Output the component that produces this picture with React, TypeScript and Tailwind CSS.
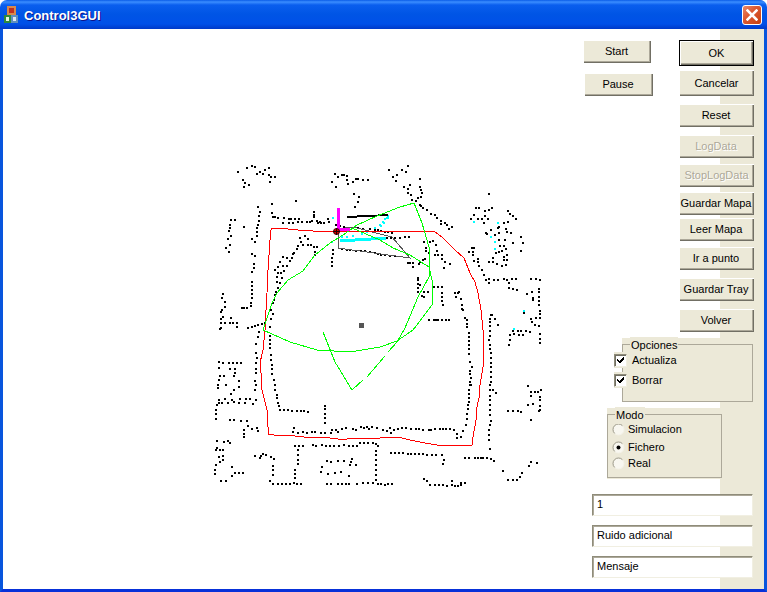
import type { ReactNode } from 'react';

type Pt = [number, number];

// scan dots, written as crop coordinates (3x zoom) relative to an origin
const dotGroups: { ox: number; oy: number; pts: number[] }[] = [
  {
    ox: 210,
    oy: 160,
    pts: [
      83,36, 110,24, 125,17, 135,22, 177,24, 165,30, 150,36, 140,42, 160,42, 177,44, 195,50, 183,52, 180,65, 98,60, 105,70, 116,75, 102,81,
      375,42, 383,50, 397,45, 403,45, 410,48, 410,60, 437,57, 445,57, 460,60, 473,60, 428,66, 415,72, 366,66, 378,80, 432,101, 446,111, 444,127, 436,140,
      258,123, 186,132, 144,141, 150,156, 186,159, 147,168, 147,183, 143,195, 142,204, 141,216, 141,228, 135,246, 126,238,
      75,180, 62,181, 60,195, 59,204, 57,214, 63,228, 54,238, 59,254, 48,264, 56,276, 102,201,
      188,171, 195,172, 205,174, 222,174, 236,177, 243,177, 255,177, 267,177, 219,188, 237,188, 248,188, 264,186, 275,186, 290,185, 300,185, 305,184, 322,183, 330,186, 342,188, 355,178, 358,187, 311,157, 311,166, 311,171, 323,190, 334,190, 378,195,
      270,234, 284,228, 294,237, 273,245, 263,258, 278,256, 293,254, 303,256, 262,266, 253,280, 249,282, 245,295, 232,295, 220,292, 210,306, 218,318, 230,318, 240,303, 203,322, 195,330, 222,333, 213,340, 203,340, 201,352, 215,355, 200,366, 211,369, 205,383, 199,396, 195,406, 192,419, 188,430, 184,450, 188,463, 184,477, 181,501,
      313,262, 322,262, 314,276, 315,286,
      126,282, 135,288, 132,313, 132,323, 127,336, 126,366, 126,378, 126,390, 126,402, 126,414, 123,429, 123,438, 112,445, 102,443, 96,444,
      39,402, 37,413, 45,427, 45,440, 35,450, 32,455, 38,471, 63,474, 32,478, 32,490, 44,489, 60,489, 69,489, 80,489, 81,501, 33,505, 30,507, 114,505, 126,501, 135,498, 144,495, 156,492, 165,488,
      368,270, 370,282, 367,295, 366,306, 366,317,
      395,268, 410,270, 420,270, 438,272, 452,273, 465,273, 480,277, 495,279, 505,281,
      390,198, 402,200, 415,203, 430,205, 445,205, 460,206, 480,207, 495,210, 505,210,
    ],
  },
  {
    ox: 380,
    oy: 160,
    pts: [
      27,30, 83,17, 65,30, 78,36, 52,45, 40,51, 47,63, 120,57, 73,81, 90,75, 120,80, 123,90, 83,87, 83,100, 126,99, 93,105, 123,110, 114,113, 96,120, 107,123, 120,135, 123,138, 130,144, 140,150, 153,162, 165,165, 172,174, 183,183, 183,192, 195,189, 200,195, 216,201, 207,207,
      327,102, 288,144, 297,144, 336,144, 327,150, 315,153, 282,165, 315,168, 273,177, 294,177, 306,177, 324,177, 312,189, 372,188, 384,186, 383,153, 390,162, 399,168, 408,177, 358,201, 354,204, 378,207, 333,210, 318,218, 321,222, 357,219, 345,225, 381,215, 392,219, 375,240, 423,231, 429,249, 399,249, 357,240, 360,258, 372,258, 348,279, 357,276, 366,273, 378,267, 423,273, 381,285, 372,291, 381,300, 372,300, 339,294, 327,306, 339,306, 351,312, 366,318, 378,315,
      281,264, 276,264, 267,276, 278,276, 279,285, 294,297, 282,303, 294,306, 297,318, 306,330, 312,345, 318,360, 327,357, 327,369, 342,360, 354,360, 372,357, 381,360, 387,369, 396,357, 408,357, 387,384, 399,387, 411,390, 453,357, 468,357, 480,360, 477,387, 477,396, 456,396, 441,402, 458,413, 460,420, 477,411, 477,423, 477,435, 431,459, 480,453, 480,462, 480,474, 468,474, 453,477, 456,486, 465,495, 477,498, 333,465, 337,465, 330,477, 345,477, 330,486, 330,498, 354,495,
      9,165, 2,213, 15,216, 24,216, 36,218, 21,234, 33,234, 45,234, 60,234, 75,231, 87,231, 132,246, 150,246, 159,243, 168,255, 138,264, 138,273, 147,279, 171,273, 165,285, 174,285, 186,285, 186,297, 195,306, 210,312, 192,324, 135,297, 129,300, 120,306, 84,309, 90,309, 99,309, 117,312, 99,321, 114,354, 114,360, 114,372, 120,375, 114,385, 114,396, 132,396, 126,408, 132,411, 144,396, 162,381, 174,381, 186,381, 186,399, 186,411, 186,423, 189,435, 225,399, 237,396, 234,399, 228,411, 243,417, 246,435, 246,447, 249,450, 255,474, 261,480, 261,492, 261,501, 147,480, 162,480, 168,480, 174,480, 186,480, 198,480, 207,480, 15,285, 30,288, 45,288, 3,285,
    ],
  },
  {
    ox: 210,
    oy: 330,
    pts: [
      147,6, 145,21, 137,42, 137,69, 141,84, 138,100, 137,117, 137,130, 135,153, 138,165, 135,180, 180,18, 180,30, 180,42, 180,54, 183,75, 183,90, 186,105, 186,117, 186,132, 192,150, 195,165, 195,180, 201,195, 201,204, 204,218, 207,228, 210,240, 222,240, 234,240, 246,243, 261,243, 273,243, 282,243, 294,246,
      27,96, 39,99, 57,99, 69,99, 81,99, 93,99, 27,114, 60,117, 75,117, 75,129, 30,138, 42,138, 72,138, 27,150, 48,165, 87,153, 87,171, 24,165, 24,175, 72,180, 63,192, 45,207, 27,210, 27,219, 36,219, 54,219, 66,210, 72,216, 90,207, 108,207, 120,207, 138,210, 87,219, 105,219, 129,222, 21,225, 18,240, 18,252, 18,267, 60,270, 72,270, 93,273, 111,273, 114,288, 102,300, 102,312, 102,320, 126,297, 141,294, 144,303,
      345,228, 345,237, 345,252, 345,264, 345,279, 252,294, 249,306, 264,309, 279,306, 291,309, 306,306, 315,306, 333,309, 345,309, 366,300, 363,309, 378,300, 384,306, 396,298, 408,294, 429,297, 438,300, 453,291, 462,294, 471,291, 477,297, 486,291, 501,294,
      21,333, 21,354, 18,360, 42,336, 54,333, 60,339, 30,360, 39,360, 39,378, 27,381, 39,390, 30,396, 18,405, 15,420, 15,432, 66,411, 75,429, 87,429, 99,429, 66,438, 33,453, 48,453,
      135,378, 153,378, 159,372, 150,384, 168,375, 183,381, 192,387, 189,408, 189,420, 189,435, 180,453, 189,462, 204,462, 216,462, 228,462, 240,462, 252,459, 261,462, 273,462,
      255,348, 267,348, 279,348, 309,345, 318,348, 336,345, 348,348, 360,348, 372,348, 387,348, 402,345, 417,348, 429,348, 441,348, 450,339, 462,339, 474,339, 489,339, 498,342, 504,348, 498,363, 498,375, 498,390, 498,405, 498,420, 498,435, 498,450, 504,462, 264,360, 264,375, 264,390, 264,402, 255,420, 255,432, 255,444,
      351,393, 363,396, 384,393, 402,393, 426,387, 423,396, 420,405, 438,405, 336,411, 333,426, 354,432, 375,429, 393,426, 417,438, 351,462, 363,462, 384,462, 396,462, 408,462, 417,462, 441,462, 459,459, 474,459, 489,459,
    ],
  },
  {
    ox: 380,
    oy: 330,
    pts: [
      267,9, 267,21, 267,33, 267,45, 267,57, 267,72, 270,96, 276,111, 270,123, 270,132, 273,144, 270,156, 270,165, 273,165, 267,180, 267,192, 267,204, 267,216, 264,225, 264,237, 261,252, 261,267, 258,285, 249,303, 243,321, 231,312, 231,324,
      330,3, 330,18, 327,30, 330,45, 330,57, 333,69, 333,84, 333,99, 333,111, 333,126, 333,141, 333,156, 330,165, 330,180, 330,198, 330,210, 330,225, 330,240, 330,255, 333,273, 330,285, 327,300, 327,315, 327,330, 330,357, 339,180, 348,189,
      399,3, 390,15, 402,12, 417,15, 429,15, 414,3, 423,3, 438,3, 450,6, 480,12, 480,27, 390,30, 387,45, 480,39,
      444,168, 453,186, 465,186, 474,186, 483,180, 453,198, 480,201, 480,210, 480,228, 444,225, 459,222, 480,240, 477,243, 384,243, 399,243, 414,243, 423,246, 453,270,
      9,300, 21,303, 30,294, 33,309, 42,300, 54,297, 66,294, 78,294, 93,297, 108,297, 117,297, 129,300, 147,300, 153,300, 165,297, 180,297, 189,297, 198,297, 210,297, 222,300,
      33,369, 45,369, 57,369, 69,369, 84,372, 93,372, 105,372, 117,372, 129,372, 141,375, 156,375, 168,375, 186,375, 192,390, 189,402, 255,384, 267,384, 285,384, 294,384, 303,384, 309,384, 321,384, 333,387, 342,393, 369,423, 384,450, 399,450, 411,450, 420,441, 426,429, 447,408, 453,396, 471,399,
      132,447, 141,453, 150,465, 165,465, 177,465, 189,465, 201,468, 216,453, 216,465, 225,468, 234,468, 243,465, 243,459, 255,459, 3,462, 15,465, 24,462, 36,462,
    ],
  },
];

// cyan readings near the robot and at the right side of the map
const cyanDots: Pt[] = [
  [332, 217], [386, 217], [382, 221], [379, 224], [374, 227], [366, 231], [361, 233], [352, 235], [346, 236], [341, 236], [331, 241],
  [387, 215], [384, 218], [387, 217], [383, 222], [380, 225], [382, 238], [473, 221], [497, 222], [490, 236], [494, 241], [494, 248], [523, 310], [513, 328],
];

const dotsPath = dotGroups
  .map((g) => {
    let d = '';
    for (let i = 0; i < g.pts.length; i += 2) {
      const x = Math.round(g.pts[i] / 3 + g.ox - 1);
      const y = Math.round(g.pts[i + 1] / 3 + g.oy - 1);
      d += `M${x} ${y}h2v2h-2z`;
    }
    return d;
  })
  .join('');

const cyanPath = cyanDots.map(([x, y]) => `M${x} ${y}h2v2h-2z`).join('');

const redLine =
  '336,231 327,231 313,231 298,230 288,229 272,228 270,232 270,240 268,270 267,293 266,310 265,330 263,350 260,363 261,373 262,390 265,402 267,410 268,427 268,434 274,435 295,436 304,437 330,438 338,439 347,439 348,438 380,438 391,437 398,437 410,440 425,443 437,445 472,445 473,437 476,420 477,407 479,398 480,385 482,373 483,367 483,330 481,310 478,293 475,282 470,273 464,258 455,250 442,237 434,231 380,231 336,231';
const greenArc =
  '263,330 272,303 277,293 288,280 303,271 315,255 330,243 343,235 357,225 377,216 400,207 414,203 422,223 429,247 429,277 418,297 405,328 397,342 388,352';
const greenArc2 =
  '263,330 290,342 317,350 350,352 380,347 397,341 413,330 432,305 432,280 429,267 410,255 393,248 380,240 352,228';
const greyLine = '338,229 338,248 410,258 392,237 353,227 338,229';

function MapView() {
  return (
    <svg width={580} height={560} viewBox="3 29 580 560" shapeRendering="crispEdges" className="shrink-0">
      <path d={dotsPath} fill="#000" />
      <path d={cyanPath} fill="#00ffff" />
      <polyline points={greyLine} fill="none" stroke="#555" strokeWidth={1} />
      <polyline points="347,217 388,215" fill="none" stroke="#000" strokeWidth={2} />
      <polyline points="340,241 386,238" fill="none" stroke="#00ffff" strokeWidth={3} />
      <polyline points={redLine} fill="none" stroke="#f00" strokeWidth={1} />
      <polyline points={greenArc} fill="none" stroke="#00ff00" strokeWidth={1} />
      <polyline points={greenArc2} fill="none" stroke="#00ff00" strokeWidth={1} />
      <polyline points="385,356 367,377" fill="none" stroke="#00ff00" strokeWidth={1} />
      <polyline points="363,380 352,390 335,362 323,332" fill="none" stroke="#00ff00" strokeWidth={1} />
      <path d="M337 208h3v20h10v3h-13z" fill="#ff00ff" />
      <circle cx={336.5} cy={231.5} r={3} fill="#e00000" stroke="#300" strokeWidth={1} shapeRendering="auto" />
      <path d="M336 228h1v7h-1zM333 231h7v1h-7z" fill="#200" />
      <rect x={359} y={323} width={5} height={5} fill="#555" />
    </svg>
  );
}

const bevel =
  'bg-[#ece9d8] shadow-[inset_1px_1px_0_#fff,inset_-1px_-1px_0_#716f64,inset_-2px_-2px_0_#aca899]';

function Btn({ className, disabled, children }: { className: string; disabled?: boolean; children: ReactNode }) {
  return (
    <div
      className={`flex items-center justify-center ${bevel} ${
        disabled ? 'text-[#aca899] [text-shadow:1px_1px_0_#fff]' : 'text-black'
      } ${className}`}
    >
      {children}
    </div>
  );
}

function CheckRow({ label, className }: { label: string; className: string }) {
  return (
    <div className={`flex items-center h-[16px] w-fit pr-1 bg-[#ece9d8] ${className}`}>
      <div className="w-[13px] h-[13px] bg-white border border-[#8f8c7a] border-r-[#f1efe2] border-b-[#f1efe2] shadow-[inset_1px_1px_0_#716f64] flex items-center justify-center">
        <svg width={9} height={9} viewBox="0 0 9 9" shapeRendering="crispEdges">
          <path d="M1 3h1v1h1v1h1V4h1V3h1V2h1V1h1v3H7v1H6v1H5v1H3V6H2V5H1z" fill="#000" />
        </svg>
      </div>
      <span className="ml-[5px]">{label}</span>
    </div>
  );
}

function RadioRow({ label, checked, className }: { label: string; checked?: boolean; className: string }) {
  return (
    <div className={`flex items-center h-[16px] ${className}`}>
      <svg width={13} height={13} viewBox="0 0 13 13" className="shrink-0">
        <circle cx={6.5} cy={6.5} r={5.5} fill="#f8f7f0" stroke="#f4f2e8" strokeWidth={1} />
        <path d="M2.6 10.4a5.5 5.5 0 0 1 7.8-7.8" fill="none" stroke="#9a9786" strokeWidth={1} />
        {checked && <circle cx={6.5} cy={6.5} r={2} fill="#000" />}
      </svg>
      <span className="ml-[3px]">{label}</span>
    </div>
  );
}

function Field({ value, className }: { value: string; className: string }) {
  return (
    <div
      className={`w-[161px] h-[22px] pl-[4px] pb-px flex items-center bg-white border border-[#f1efe2] border-t-[#8f8c7a] border-l-[#8f8c7a] shadow-[inset_1px_1px_0_#aca899] ${className}`}
    >
      {value}
    </div>
  );
}

export default function App() {
  return (
    <div className="w-[767px] h-[592px] flex flex-col bg-white font-['Liberation_Sans',sans-serif] text-[11px] text-black overflow-hidden">
      {/* Title bar */}
      <div className="h-[29px] shrink-0 flex items-center pl-[4px] pr-[5px] rounded-t-[7px] bg-[linear-gradient(to_bottom,#0a5ce8_0,#3b8dff_2px,#0a5eee_5px,#0055e5_14px,#0050e8_24px,#0039c8_29px)]">
        <svg width={15} height={18} viewBox="0 0 15 18" className="shrink-0 mt-[1px]" shapeRendering="crispEdges">
          <rect x={3} y={0} width={9} height={9} fill="#d8894c" />
          <rect x={5} y={2} width={5} height={5} fill="#c03020" />
          <rect x={0} y={9} width={7} height={8} fill="#2f8a3a" />
          <rect x={2} y={11} width={3} height={4} fill="#e8f4e0" />
          <rect x={7} y={9} width={7} height={8} fill="#5f8fc0" />
          <rect x={9} y={11} width={3} height={4} fill="#dce8f4" />
        </svg>
        <span className="ml-[5px] mt-[2px] text-white font-bold text-[13px] [text-shadow:1px_1px_0_#0f1089]">Control3GUI</span>
        <div className="ml-auto w-[20px] h-[20px] rounded-[3px] border border-white flex items-center justify-center bg-[linear-gradient(135deg,#e88a6c,#dc5a34_40%,#c8400f)]">
          <svg width={12} height={12} viewBox="0 0 12 12">
            <path d="M1.5 1.5l9 9M10.5 1.5l-9 9" stroke="#fff" strokeWidth={2.5} strokeLinecap="square" />
          </svg>
        </div>
      </div>

      {/* Client area */}
      <div className="flex-1 flex border-x-[3px] border-x-[#0855dd] border-b-[3px] border-b-[#0831d9] bg-[linear-gradient(to_right,#fff_717px,#ece9d8_717px)]">
        <MapView />

        <div className="w-[181px] shrink-0 pt-[11px]">
          <div className="flex">
            <div className="w-[96px]">
              <Btn className="w-[68px] h-[23px] pr-px">Start</Btn>
              <Btn className="w-[69px] h-[23px] ml-[1px] mt-[10px] pr-px">Pause</Btn>
            </div>
            <div className="w-[75px]">
              <Btn className="h-[26px] border border-black">OK</Btn>
              <Btn className="h-[26px] mt-[4px]">Cancelar</Btn>
              <Btn className="h-[23px] mt-[8px] pr-px">Reset</Btn>
              <Btn disabled className="h-[23px] mt-[8px] pr-px">LogData</Btn>
              <Btn disabled className="h-[23px] mt-[6px]">StopLogData</Btn>
              <Btn className="h-[23px] mt-[5px] pr-px">Guardar Mapa</Btn>
              <Btn className="h-[23px] mt-[3px] pr-px">Leer Mapa</Btn>
              <Btn className="h-[23px] mt-[6px] pr-px">Ir a punto</Btn>
              <Btn className="h-[23px] mt-[8px] pr-px">Guardar Tray</Btn>
              <Btn className="h-[23px] mt-[8px] pr-px">Volver</Btn>
            </div>
          </div>

          {/* Opciones */}
          <div className="ml-[39px] w-[131px] mt-[6px] pt-[6px] bg-[#ece9d8]">
            <div className="relative h-[58px] border border-[#aca899] pt-[7px]">
              <span className="absolute left-[7px] -top-[8px] px-[1px] bg-[#ece9d8]">Opciones</span>
              <CheckRow label="Actualiza" className="-ml-[9px]" />
              <CheckRow label="Borrar" className="-ml-[9px] mt-[4px]" />
            </div>
          </div>

          {/* Modo */}
          <div className="ml-[24px] w-[115px] mt-[6px] pt-[6px] pb-px bg-[#ece9d8]">
            <div className="relative h-[64px] border border-[#aca899] pt-[6px] pl-[4px]">
              <span className="absolute left-[7px] -top-[8px] px-[1px] bg-[#ece9d8]">Modo</span>
              <RadioRow label="Simulacion" className="" />
              <RadioRow label="Fichero" checked className="mt-[2px]" />
              <RadioRow label="Real" className="" />
            </div>
          </div>

          <Field value="1" className="ml-[9px] mt-[15px]" />
          <Field value="Ruido adicional" className="ml-[9px] mt-[9px]" />
          <Field value="Mensaje" className="ml-[9px] mt-[9px]" />
        </div>
      </div>
    </div>
  );
}
